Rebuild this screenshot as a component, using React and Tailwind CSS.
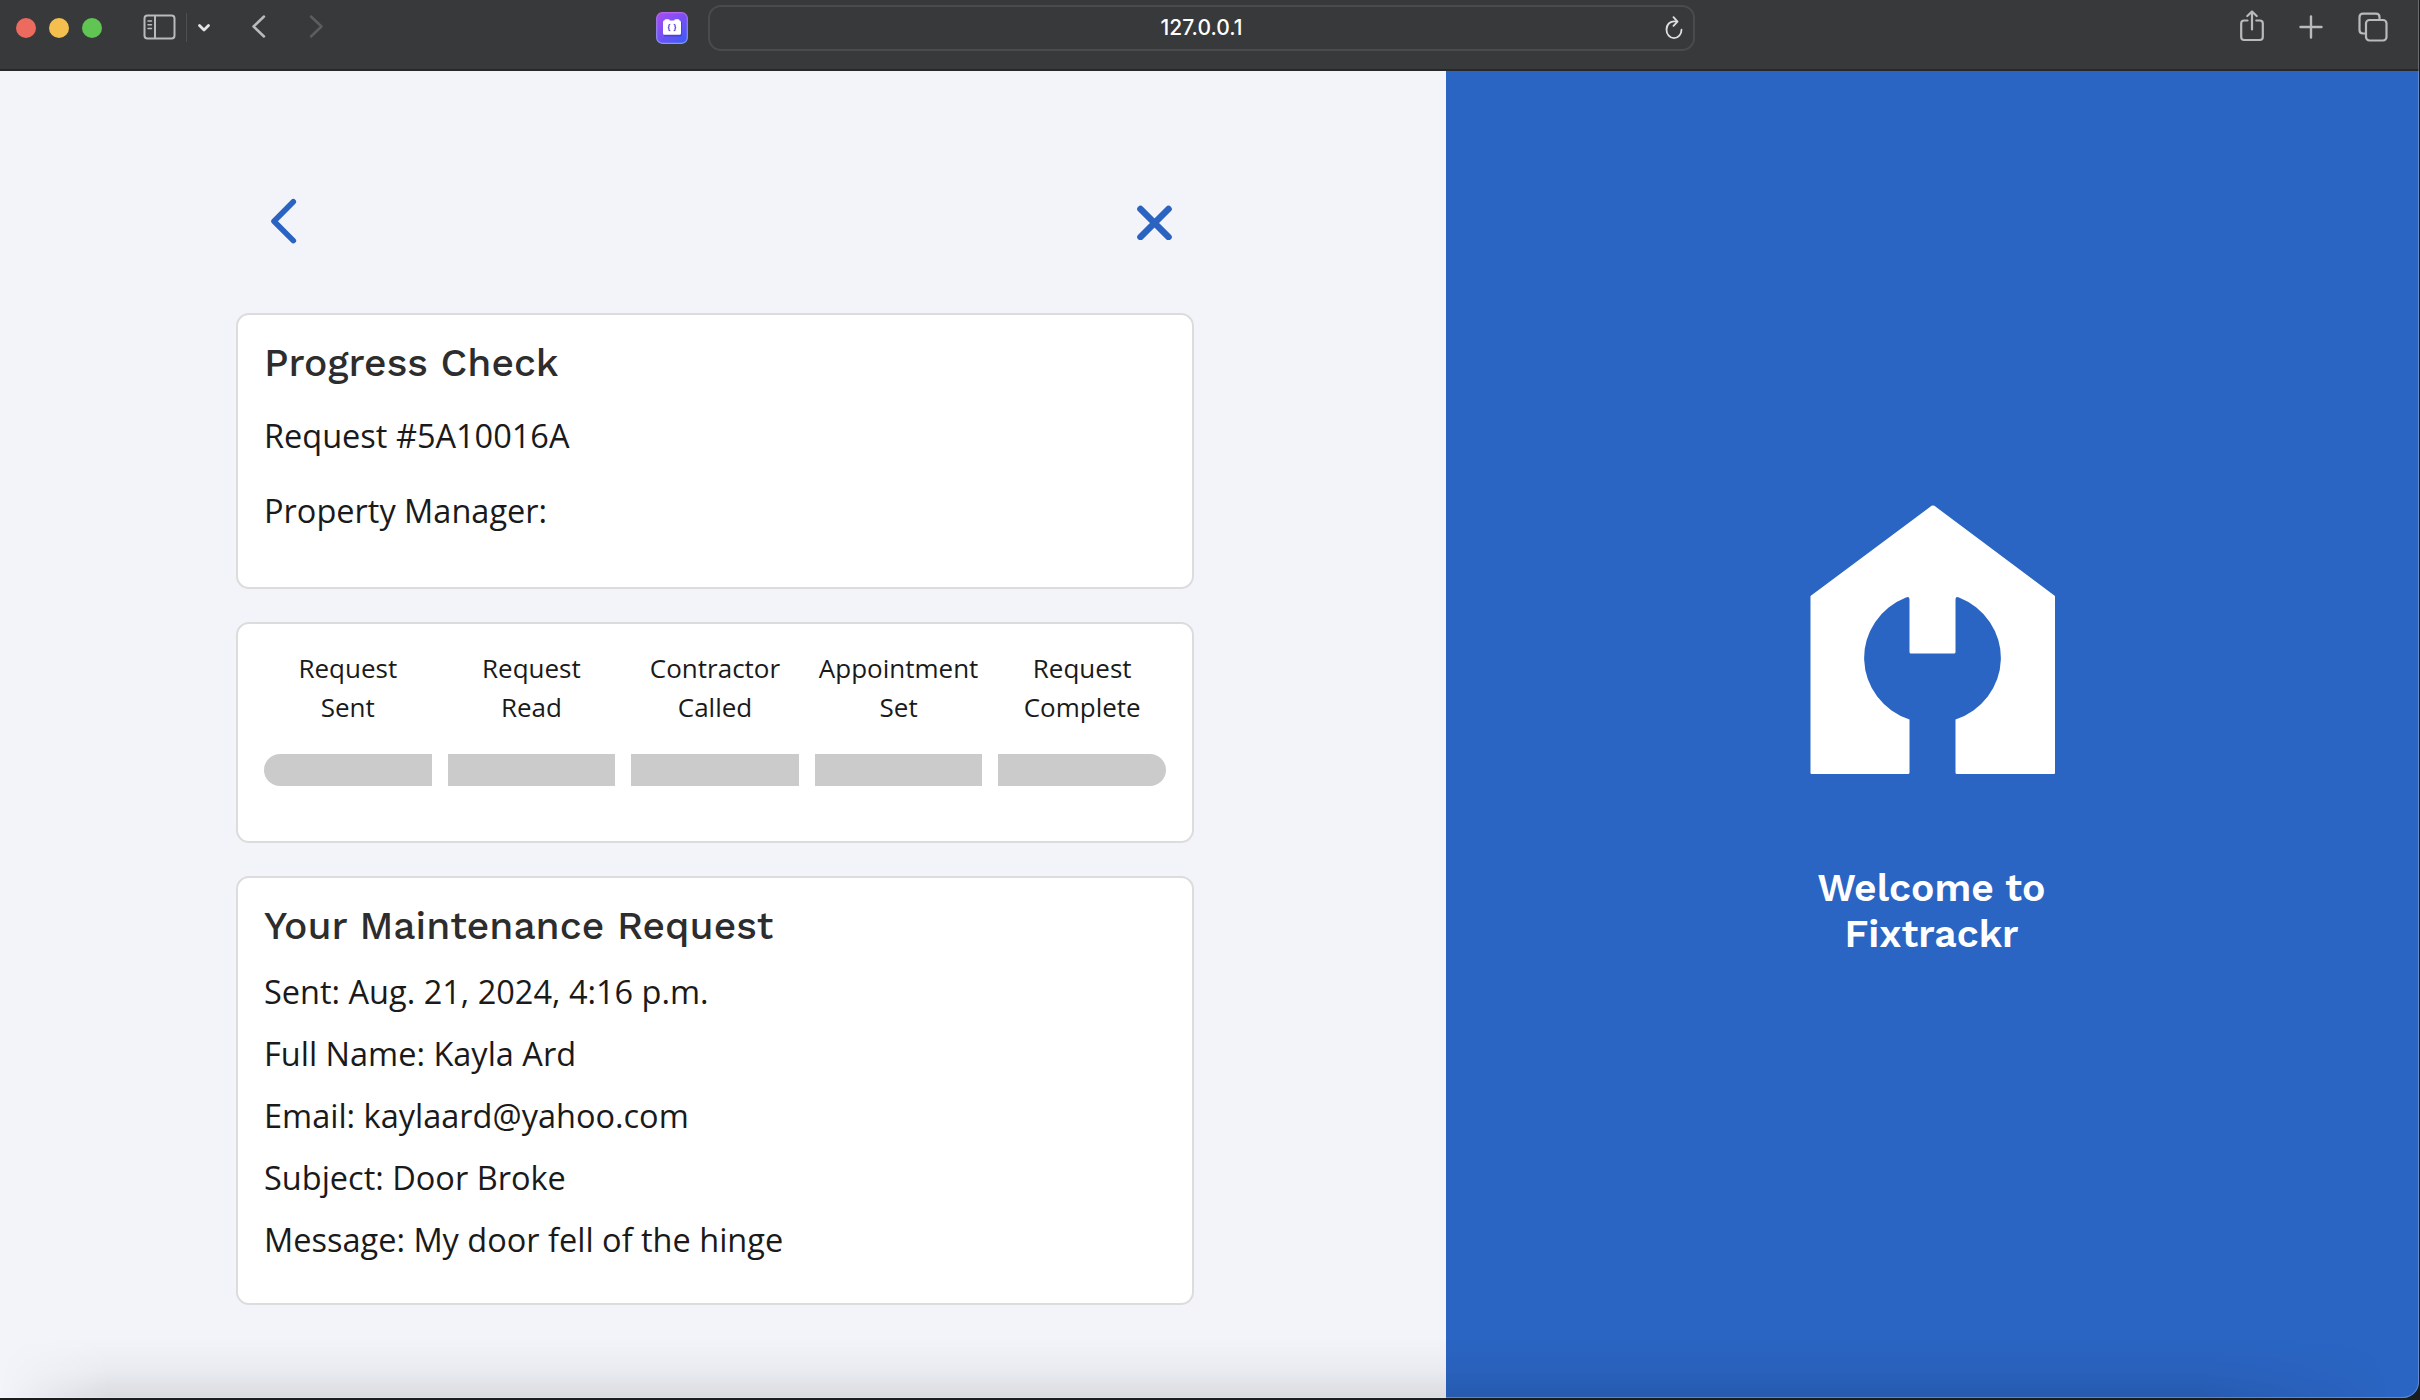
import React from "react";

const steps = [
  { top: "Request", bottom: "Sent", shape: "rounded-l-full" },
  { top: "Request", bottom: "Read", shape: "" },
  { top: "Contractor", bottom: "Called", shape: "" },
  { top: "Appointment", bottom: "Set", shape: "" },
  { top: "Request", bottom: "Complete", shape: "rounded-r-full" },
];

const details = [
  "Sent: Aug. 21, 2024, 4:16 p.m.",
  "Full Name: Kayla Ard",
  "Email: kaylaard@yahoo.com",
  "Subject: Door Broke",
  "Message: My door fell of the hinge",
];

function Stroke({ className, width, height, d, strokeWidth = 2 }) {
  return (
    <svg
      className={`shrink-0 ${className}`}
      width={width}
      height={height}
      viewBox={`0 0 ${width} ${height}`}
      fill="none"
      stroke="currentColor"
      strokeWidth={strokeWidth}
      strokeLinecap="round"
      strokeLinejoin="round"
    >
      <path d={d} />
    </svg>
  );
}

function SidebarIcon() {
  return (
    <svg className="mb-[2px] ml-[41px] shrink-0 text-[#b9baba]" width="33" height="26" viewBox="0 0 33 26" fill="none" stroke="currentColor" strokeWidth="2">
      <rect x="1.5" y="1.5" width="30" height="23" rx="3" />
      <path d="M12 1.5v23" />
      <path d="M5 7h3.5M5 10.7h3.5M5 14.4h3.5" strokeWidth="1.5" strokeLinecap="round" />
    </svg>
  );
}

function ExtensionIcon() {
  return (
    <svg className="ml-[332px] shrink-0" width="32" height="32" viewBox="0 0 32 32">
      <defs>
        <linearGradient id="ext" x1="0.1" y1="0" x2="0.9" y2="1">
          <stop offset="0" stopColor="#a44df2" />
          <stop offset="0.5" stopColor="#7450f5" />
          <stop offset="1" stopColor="#3b5cf6" />
        </linearGradient>
        <linearGradient id="rim" x1="0" y1="0" x2="0" y2="1">
          <stop offset="0" stopColor="#b565ee" />
          <stop offset="1" stopColor="#7d9cf8" />
        </linearGradient>
      </defs>
      <rect x="0.7" y="0.7" width="30.6" height="30.6" rx="5.5" fill="url(#ext)" stroke="url(#rim)" strokeWidth="1.2" />
      <rect x="8" y="9" width="18" height="15.5" rx="1.5" fill="#3c35c9" opacity="0.6" />
      <path d="M8.5 8.5q0-1.3 1.3-1.3h2.6q1.3 0 1.3 1.3h4.6q0-1.3 1.3-1.3h2.6q1.3 0 1.3 1.3q1.5 .2 1.5 1.7v11q0 1.5-1.5 1.5h-15q-1.5 0-1.5-1.5v-11q0-1.5 1-1.7z" fill="#fff" />
      <path d="M14.3 12.3q-1.4 0-1.4 1.2v1q0 .9-1 1q1 .1 1 1v1q0 1.2 1.4 1.2M17.7 12.3q1.4 0 1.4 1.2v1q0 .9 1 1q-1 .1-1 1v1q0 1.2-1.4 1.2" fill="none" stroke="#6a4fd8" strokeWidth="1.3" />
    </svg>
  );
}

function TabsIcon() {
  return (
    <svg className="mb-[2px] ml-[35px] shrink-0 text-[#b9baba]" width="30" height="30" viewBox="0 0 30 30" fill="none" stroke="currentColor" strokeWidth="2.2">
      <rect x="8" y="8" width="20.5" height="20.5" rx="3.5" />
      <path d="M8 21.5H5q-3.5 0-3.5-3.5V5.2Q1.5 1.7 5 1.7h13Q21.5 1.7 21.5 5.2V8" />
    </svg>
  );
}

function BrowserBar() {
  return (
    <header className="flex h-[71px] shrink-0 items-start border-b-2 border-[#272829] bg-[#38393a]">
      <div className="flex h-[55px] w-full items-center">
        <div className="ml-4 flex gap-[13px]">
          <span className="size-5 rounded-full bg-[#ed6a5e]" />
          <span className="size-5 rounded-full bg-[#f5bf4f]" />
          <span className="size-5 rounded-full bg-[#61c554]" />
        </div>
        <SidebarIcon />
        <span className="ml-[10px] h-[29px] w-px bg-[#4e4f50]" />
        <Stroke className="ml-[10px] text-[#e4e4e4]" width={14} height={10} d="M2.5 2.5l4.5 4.5l4.5-4.5" strokeWidth={2.8} />
        <Stroke className="mb-[1px] ml-[40px] text-[#b9baba]" width={16} height={26} d="M13 2.5L2.5 12.5L13 22.5" strokeWidth={2.5} />
        <Stroke className="mb-[1px] ml-[41px] text-[#5c5d5e]" width={16} height={26} d="M3 2.5L13.5 12.5L3 22.5" strokeWidth={2.5} />
        <ExtensionIcon />
        <div className="ml-5 flex h-[46px] w-[987px] items-center rounded-[13px] border-2 border-[#4a4b4c] pr-[8px]">
          <span className="flex-1 pt-px pl-[29px] text-center font-[Inter,sans-serif] text-[21px] font-medium text-white">127.0.0.1</span>
          <svg className="shrink-0 text-[#dededf]" width="21" height="24" viewBox="0 0 21 24" fill="none" stroke="currentColor" strokeWidth="1.8" strokeLinecap="round" strokeLinejoin="round">
            <path d="M12.5 5.6C6 4.4 2.5 8.5 2.5 13.7a7.5 8.5 0 0 0 15 0" />
            <path d="M9.5 1.2l4 4.5l-4 4.2" />
          </svg>
        </div>
        <svg className="mb-1 ml-[545px] shrink-0 text-[#b9baba]" width="24" height="32" viewBox="0 0 24 32" fill="none" stroke="currentColor" strokeWidth="2.2" strokeLinecap="round" strokeLinejoin="round">
          <path d="M7.5 10.5H4Q1.2 10.5 1.2 13.5v13.5q0 3 3 3h15.6q3 0 3-3V13.5q0-3-3-3h-3.5" />
          <path d="M12 19.5V1.5M7.3 6L12 1.5l4.7 4.5" />
        </svg>
        <Stroke className="mb-[2px] ml-[35px] text-[#b9baba]" width={24} height={24} d="M12 1.5v21M1.5 12h21" strokeWidth={2.4} />
        <TabsIcon />
      </div>
    </header>
  );
}

function Card({ className, children }) {
  return (
    <section className={`rounded-[13px] border-2 border-[#dcdcdd] bg-white px-[26px] ${className}`}>{children}</section>
  );
}

function Heading({ children }) {
  return (
    <h2 className="font-['Work_Sans',Inter,sans-serif] text-[39px] leading-[46px] font-medium text-[#2d2d2d]">{children}</h2>
  );
}

function RequestPanel() {
  return (
    <main className="flex w-[1446px] shrink-0 flex-col bg-[#f3f4f9] pr-[252px] pl-[236px] font-['Open_Sans',sans-serif] text-[32.5px] leading-[48.75px] text-[#1a1a1a]">
      <div className="mt-[126px] flex h-[48px] items-center justify-between pr-[20px] pl-[34px] text-[#2a63c1]">
        <Stroke className="" width={28} height={48} d="M23.3 4.8L4 24.2L23.3 43.6" strokeWidth={5.6} />
        <Stroke className="" width={38} height={38} d="M4.5 7L32.5 35M32.5 7L4.5 35" strokeWidth={6.6} />
      </div>
      <Card className="mt-[68px] h-[276px] pt-[25px]">
        <Heading>Progress Check</Heading>
        <p className="mt-[26px]">Request #5A10016A</p>
        <p className="mt-[26px]">Property Manager:</p>
      </Card>
      <Card className="mt-[33px] h-[221px] pt-[25px]">
        <div className="grid grid-cols-5 gap-4">
          {steps.map((s) => (
            <div key={s.top + s.bottom} className="flex flex-col text-center text-[26px] leading-[39px]">
              <span>{s.top}</span>
              <span>{s.bottom}</span>
              <span className={`mt-[27px] h-8 bg-[#cbcbcb] ${s.shape}`} />
            </div>
          ))}
        </div>
      </Card>
      <Card className="mt-[33px] h-[429px] pt-[25px]">
        <Heading>Your Maintenance Request</Heading>
        <div className="mt-[19px] flex flex-col gap-[13.25px]">
          {details.map((d) => (
            <p key={d}>{d}</p>
          ))}
        </div>
      </Card>
    </main>
  );
}

function HouseLogo() {
  return (
    <svg className="mt-[434px] shrink-0" width="246" height="270" viewBox="0 0 246 270">
      <path
        fill="#fff"
        d="M121.6 .8Q123 0 124.4 .8L245 91V268q0 1-1 1H147q-1.5 0-1.5-1.5V214.5A66.5 65 0 0 0 149 92.5Q145.5 91 145.5 94.5V147q0 1.5-1.5 1.5H101q-1.5 0-1.5-1.5V94.5Q99.5 91 96 92.5A66.5 65 0 0 0 99.5 214.5V267.5q0 1.5-1.5 1.5H1.5q-1 0-1-1V91z"
      />
    </svg>
  );
}

function WelcomePanel() {
  return (
    <aside className="flex flex-1 flex-col items-center bg-[#2b65c3]">
      <HouseLogo />
      <h1 className="mt-[90px] mr-[2px] text-center font-['Work_Sans',Inter,sans-serif] text-[39px] leading-[45.5px] font-semibold text-white">
        Welcome to
        <br />
        Fixtrackr
      </h1>
    </aside>
  );
}

export default function App() {
  return (
    <div className="h-[1400px] w-[2420px] overflow-hidden bg-[#1b1c1d] pr-px pb-[2px]">
      <div className="relative flex h-full flex-col overflow-hidden rounded-br-[16px] bg-[#2b65c3]">
        <BrowserBar />
        <div className="flex flex-1">
          <RequestPanel />
          <WelcomePanel />
        </div>
        <div className="pointer-events-none absolute inset-x-0 bottom-0 h-[60px] bg-[linear-gradient(to_top,rgba(0,0,0,0.1),rgba(0,0,0,0.035)_45%,transparent)] [mask-image:linear-gradient(to_right,transparent,#000_110px,#000_2200px,transparent_2390px)]" />
        <div className="pointer-events-none absolute inset-0 rounded-br-[16px] border-r border-b border-white/25" />
      </div>
    </div>
  );
}
